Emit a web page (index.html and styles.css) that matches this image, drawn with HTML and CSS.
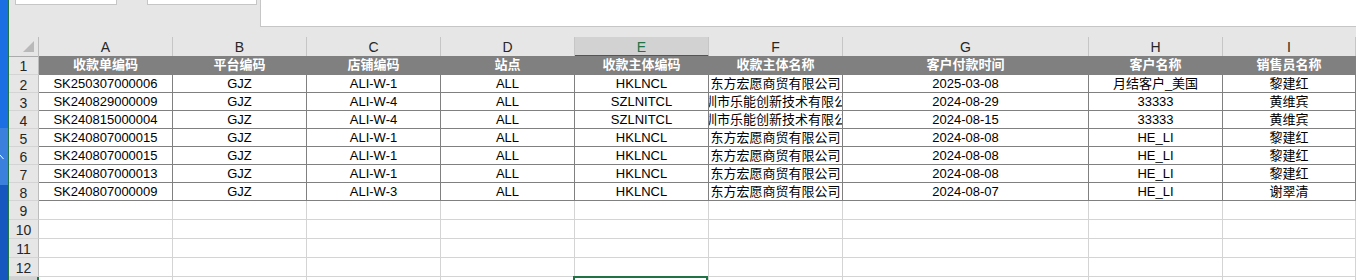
FILE: index.html
```html
<!DOCTYPE html>
<html lang="zh">
<head>
<meta charset="utf-8">
<title>Sheet</title>
<link rel="stylesheet" href="styles.css">
</head>
<body>
<div class="desktop">
  <svg class="mark" width="8" height="8" viewBox="0 0 8 8"><path d="M0 1 L3.5 5" stroke="#fff" stroke-width="1" fill="none"/></svg>
</div>
<div class="window">
  <div class="ribbon">
    <div class="box box1"></div>
    <div class="box box2"></div>
    <div class="box box3"></div>
  </div>
  <div class="sheet">
    <div class="row colhead">
      <div class="corner"><svg width="12" height="12" viewBox="0 0 12 12"><path d="M11 0 L11 11 L0 11 Z" fill="#b9b9b9"/></svg></div>
      <div class="ch">A</div><div class="ch">B</div><div class="ch">C</div><div class="ch">D</div>
      <div class="ch sel">E</div><div class="ch">F</div><div class="ch">G</div><div class="ch">H</div><div class="ch">I</div>
    </div>
    <div class="row r1">
      <div class="rh">1</div>
      <div class="c h">收款单编码</div><div class="c h">平台编码</div><div class="c h">店铺编码</div><div class="c h">站点</div>
      <div class="c h">收款主体编码</div><div class="c h">收款主体名称</div><div class="c h">客户付款时间</div><div class="c h">客户名称</div><div class="c h">销售员名称</div>
    </div>
    <div class="row rd">
      <div class="rh">2</div>
      <div class="c d">SK250307000006</div><div class="c d">GJZ</div><div class="c d">ALI-W-1</div><div class="c d">ALL</div>
      <div class="c d">HKLNCL</div><div class="c d">东方宏愿商贸有限公司</div><div class="c d">2025-03-08</div><div class="c d">月结客户_美国</div><div class="c d">黎建红</div>
    </div>
    <div class="row rd">
      <div class="rh">3</div>
      <div class="c d">SK240829000009</div><div class="c d">GJZ</div><div class="c d">ALI-W-4</div><div class="c d">ALL</div>
      <div class="c d">SZLNITCL</div><div class="c d">深圳市乐能创新技术有限公司</div><div class="c d">2024-08-29</div><div class="c d">33333</div><div class="c d">黄维宾</div>
    </div>
    <div class="row rd">
      <div class="rh">4</div>
      <div class="c d">SK240815000004</div><div class="c d">GJZ</div><div class="c d">ALI-W-4</div><div class="c d">ALL</div>
      <div class="c d">SZLNITCL</div><div class="c d">深圳市乐能创新技术有限公司</div><div class="c d">2024-08-15</div><div class="c d">33333</div><div class="c d">黄维宾</div>
    </div>
    <div class="row rd">
      <div class="rh">5</div>
      <div class="c d">SK240807000015</div><div class="c d">GJZ</div><div class="c d">ALI-W-1</div><div class="c d">ALL</div>
      <div class="c d">HKLNCL</div><div class="c d">东方宏愿商贸有限公司</div><div class="c d">2024-08-08</div><div class="c d">HE_LI</div><div class="c d">黎建红</div>
    </div>
    <div class="row rd">
      <div class="rh">6</div>
      <div class="c d">SK240807000015</div><div class="c d">GJZ</div><div class="c d">ALI-W-1</div><div class="c d">ALL</div>
      <div class="c d">HKLNCL</div><div class="c d">东方宏愿商贸有限公司</div><div class="c d">2024-08-08</div><div class="c d">HE_LI</div><div class="c d">黎建红</div>
    </div>
    <div class="row rd">
      <div class="rh">7</div>
      <div class="c d">SK240807000013</div><div class="c d">GJZ</div><div class="c d">ALI-W-1</div><div class="c d">ALL</div>
      <div class="c d">HKLNCL</div><div class="c d">东方宏愿商贸有限公司</div><div class="c d">2024-08-08</div><div class="c d">HE_LI</div><div class="c d">黎建红</div>
    </div>
    <div class="row rd">
      <div class="rh">8</div>
      <div class="c d">SK240807000009</div><div class="c d">GJZ</div><div class="c d">ALI-W-3</div><div class="c d">ALL</div>
      <div class="c d">HKLNCL</div><div class="c d">东方宏愿商贸有限公司</div><div class="c d">2024-08-07</div><div class="c d">HE_LI</div><div class="c d">谢翠清</div>
    </div>
    <div class="row re">
      <div class="rh">9</div>
      <div class="c"></div><div class="c"></div><div class="c"></div><div class="c"></div><div class="c"></div><div class="c"></div><div class="c"></div><div class="c"></div><div class="c"></div>
    </div>
    <div class="row re">
      <div class="rh">10</div>
      <div class="c"></div><div class="c"></div><div class="c"></div><div class="c"></div><div class="c"></div><div class="c"></div><div class="c"></div><div class="c"></div><div class="c"></div>
    </div>
    <div class="row re">
      <div class="rh">11</div>
      <div class="c"></div><div class="c"></div><div class="c"></div><div class="c"></div><div class="c"></div><div class="c"></div><div class="c"></div><div class="c"></div><div class="c"></div>
    </div>
    <div class="row re">
      <div class="rh">12</div>
      <div class="c"></div><div class="c"></div><div class="c"></div><div class="c"></div><div class="c"></div><div class="c"></div><div class="c"></div><div class="c"></div><div class="c"></div>
    </div>
    <div class="row re">
      <div class="rh selrow">13</div>
      <div class="c"></div><div class="c"></div><div class="c"></div><div class="c"></div><div class="c active"></div><div class="c"></div><div class="c"></div><div class="c"></div><div class="c"></div>
    </div>
  </div>
</div>
</body>
</html>
```

FILE: styles.css
```css
* { box-sizing: border-box; }
html, body { margin: 0; padding: 0; }
body {
  width: 1356px;
  height: 280px;
  overflow: hidden;
  background: #e6e6e6;
  font-family: "Liberation Sans", "Noto Sans CJK SC", sans-serif;
  display: flex;
}
.desktop {
  width: 8px;
  flex: none;
  background: linear-gradient(to bottom, #1c6fe3 0, #1c6fe3 128px, #3a80dc 128px, #3a80dc 185px, #1656bf 185px, #1656bf 280px);
  display: flex;
  flex-direction: column;
}
.mark { margin-top: 154px; display: block; }
.window {
  flex: 1;
  min-width: 0;
  border-left: 1px solid #217346;
  display: flex;
  flex-direction: column;
}
.ribbon {
  height: 37px;
  flex: none;
  display: flex;
  align-items: flex-start;
  padding-left: 6px;
}
.box { background: #fff; border: 1px solid #c6c6c6; border-top: none; }
.box1 { width: 102px; height: 5px; }
.box2 { width: 110px; height: 5px; margin-left: 30px; }
.box3 { flex: 1; height: 27px; margin-left: 3px; border-right: none; }

.sheet { display: flex; flex-direction: column; }
.row {
  display: grid;
  grid-template-columns: 30px repeat(6, 134px) 246px 134px 133px;
}
.colhead { height: 19px; }
.r1 { height: 19px; }
.rd { height: 18px; }
.re { height: 19px; }

.corner {
  border-right: 1px solid #bcbcbc;
  border-bottom: 1px solid #ababab;
  display: flex;
  justify-content: flex-end;
  align-items: flex-end;
  padding: 0 3px 3px 0;
}
.corner svg { display: block; }
.ch {
  border-right: 1px solid #c6c6c6;
  border-bottom: 1px solid #ababab;
  font-size: 14px;
  line-height: 16px;
  padding-top: 2px;
  text-align: center;
  color: #262626;
}
.ch.sel {
  background: #d2d2d2;
  color: #217346;
  border-bottom: 2px solid #217346;
}
.rh {
  border-right: 1px solid #bcbcbc;
  border-bottom: 1px solid #d4d4d4;
  font-size: 14px;
  line-height: 18px;
  padding-top: 1px;
  text-align: center;
  color: #262626;
  overflow: hidden;
}
.rh.selrow {
  background: #d2d2d2;
  border-right: 2px solid #217346;
}
.c {
  background: #fff;
  border-right: 1px solid #d4d4d4;
  border-bottom: 1px solid #d4d4d4;
  display: flex;
  justify-content: center;
  align-items: center;
  overflow: hidden;
  white-space: nowrap;
  font-size: 13px;
  line-height: 18px;
  color: #000;
}
.c.d { border-color: #808080; }
.c.h {
  background: #808080;
  border-color: #808080;
  color: #fff;
  font-weight: bold;
}
.c.active { position: relative; overflow: visible; }
.c.active::after {
  content: "";
  position: absolute;
  top: -1px;
  left: -2px;
  right: 0;
  height: 30px;
  border: 2px solid #217346;
}
```
